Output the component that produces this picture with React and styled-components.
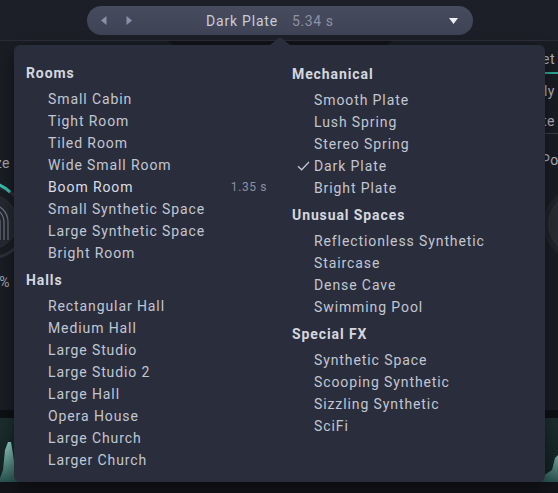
import React from 'react';
import styled, { createGlobalStyle } from 'styled-components';

const GlobalStyle = createGlobalStyle`
  * { box-sizing: border-box; }
  html, body { margin: 0; padding: 0; background: #1b1d25; }
  body { font-family: Roboto, "Liberation Sans", sans-serif; -webkit-font-smoothing: antialiased; }
  #root { width: 558px; height: 493px; }
`;

const columns = [
  [
    {
      title: 'Rooms',
      items: [
        { name: 'Small Cabin' },
        { name: 'Tight Room' },
        { name: 'Tiled Room' },
        { name: 'Wide Small Room' },
        { name: 'Boom Room', time: '1.35 s', hover: true },
        { name: 'Small Synthetic Space' },
        { name: 'Large Synthetic Space' },
        { name: 'Bright Room' },
      ],
    },
    {
      title: 'Halls',
      items: [
        { name: 'Rectangular Hall' },
        { name: 'Medium Hall' },
        { name: 'Large Studio' },
        { name: 'Large Studio 2' },
        { name: 'Large Hall' },
        { name: 'Opera House' },
        { name: 'Large Church' },
        { name: 'Larger Church' },
      ],
    },
  ],
  [
    {
      title: 'Mechanical',
      items: [
        { name: 'Smooth Plate' },
        { name: 'Lush Spring' },
        { name: 'Stereo Spring' },
        { name: 'Dark Plate', checked: true },
        { name: 'Bright Plate' },
      ],
    },
    {
      title: 'Unusual Spaces',
      items: [
        { name: 'Reflectionless Synthetic' },
        { name: 'Staircase' },
        { name: 'Dense Cave' },
        { name: 'Swimming Pool' },
      ],
    },
    {
      title: 'Special FX',
      items: [
        { name: 'Synthetic Space' },
        { name: 'Scooping Synthetic' },
        { name: 'Sizzling Synthetic' },
        { name: 'SciFi' },
      ],
    },
  ],
];

const App = () => {
  return (
    <>
      <GlobalStyle />
      <Page>
        <TopBar>
          <Pill>
            <ArrowBtn>
              <svg width='6' height='9' viewBox='0 0 6 9'>
                <path d='M5.5 0 L0 4.5 L5.5 9 Z' fill='currentColor' />
              </svg>
            </ArrowBtn>
            <ArrowBtn>
              <svg width='6' height='9' viewBox='0 0 6 9'>
                <path d='M0.5 0 L6 4.5 L0.5 9 Z' fill='currentColor' />
              </svg>
            </ArrowBtn>
            <Title>
              Dark Plate<TitleTime>5.34 s</TitleTime>
            </Title>
            <Caret>
              <svg width='9' height='6' viewBox='0 0 9 6'>
                <path d='M0 0 H9 L4.5 6 Z' fill='currentColor' />
              </svg>
            </Caret>
          </Pill>
        </TopBar>
        <Tab />
        <Body>
          <SideLeft>
            <SideLabel>Size</SideLabel>
            <KnobLeft viewBox='0 0 80 80' width='80' height='80'>
              <circle cx='40' cy='40' r='36' fill='none' stroke='#2d303a' strokeWidth='3' />
              <path d='M14.5 65.5 A36 36 0 1 1 60.1 10.1' fill='none' stroke='#35c3ad' strokeWidth='3' />
              <circle cx='40' cy='40' r='27' fill='#262831' stroke='#31343e' strokeWidth='1' />
              <path d='M30 58 V40 A10 10 0 0 1 50 40 V58' fill='none' stroke='#6f7484' strokeWidth='1.2' />
              <path d='M26 58 V40 A14 14 0 0 1 54 40 V58' fill='none' stroke='#6f7484' strokeWidth='1.2' />
              <path d='M22 58 V40 A18 18 0 0 1 58 40 V58' fill='none' stroke='#6f7484' strokeWidth='1.2' />
            </KnobLeft>
            <SideLabel $gap={11}>100%</SideLabel>
          </SideLeft>
          <Center />
          <SideRight>
            <SideTab $accent>Reset</SideTab>
            <SideTab $gap={8}>Early</SideTab>
            <SideTab $gap={12} $line>Late</SideTab>
            <PostLabel>Post</PostLabel>
            <KnobRight viewBox='0 0 80 80' width='80' height='80'>
              <circle cx='40' cy='40' r='37' fill='#22242c' />
              <circle cx='40' cy='40' r='31' fill='#2a2c35' stroke='#32353f' strokeWidth='1' />
            </KnobRight>
          </SideRight>
        </Body>
        <WaveArea>
          <svg width='558' height='64' viewBox='0 0 558 64'>
            <defs>
              <linearGradient id='wv' x1='0' y1='0' x2='0' y2='1'>
                <stop offset='0' stopColor='#8fcfc6' />
                <stop offset='1' stopColor='#2a5450' />
              </linearGradient>
            </defs>
            <path d='M0 64 V60 L3 52 L5 32 L8 24 L11 24 L13 36 L16 60 L540 60 L552 52 L555 40 L558 37 V64 Z' fill='url(#wv)' />
          </svg>
        </WaveArea>
        <Footer />

        <Dropdown>
          <Columns>
            {columns.map((sections, ci) => (
              <Column key={ci} $right={ci === 1}>
                {sections.map((section) => (
                  <Section key={section.title}>
                    <SectionTitle>{section.title}</SectionTitle>
                    {section.items.map((item) => (
                      <Item key={item.name} $hover={item.hover}>
                        <CheckSlot>
                          {item.checked && (
                            <svg width='13' height='10' viewBox='0 0 13 10'>
                              <path d='M1 5.2 L4.6 8.8 L12 1' fill='none' stroke='currentColor' strokeWidth='1.3' />
                            </svg>
                          )}
                        </CheckSlot>
                        <ItemName>{item.name}</ItemName>
                        {item.time && <ItemTime>{item.time}</ItemTime>}
                      </Item>
                    ))}
                  </Section>
                ))}
              </Column>
            ))}
          </Columns>
        </Dropdown>
      </Page>
    </>
  );
};

const Page = styled.div`
  position: relative;
  width: 558px;
  height: 493px;
  overflow: hidden;
  background: #1b1d25;
  display: flex;
  flex-direction: column;
`;

const TopBar = styled.div`
  height: 41px;
  flex: none;
  display: flex;
  justify-content: center;
  padding: 6px 0 0 2px;
  background: #1d1f28;
  border-bottom: 1px solid #2a2d38;
`;

const Pill = styled.div`
  width: 386px;
  height: 29px;
  border-radius: 15px;
  background: linear-gradient(#464b5e, #3e4355);
  display: flex;
  align-items: center;
  padding: 0 15px 0 14px;
  color: #c8ccd8;
`;

const ArrowBtn = styled.span`
  display: flex;
  color: #8990a8;
  & + & {
    margin-left: 19px;
  }
`;

const Title = styled.span`
  margin-left: 74px;
  font-size: 14px;
  letter-spacing: 0.8px;
  color: #c9cdd9;
`;

const TitleTime = styled.span`
  margin-left: 14px;
  letter-spacing: 0.6px;
  color: #8c92a8;
`;

const Caret = styled.span`
  margin-left: auto;
  display: flex;
  color: #eef0f5;
`;

const Tab = styled.div`
  flex: none;
  height: 5px;
  width: 224px;
  margin-left: 168px;
  background: #111319;
  clip-path: polygon(0 0, 100% 0, calc(100% - 6px) 100%, 6px 100%);
`;

const Body = styled.div`
  flex: none;
  height: 364px;
  display: flex;
`;

const SideLeft = styled.div`
  width: 70px;
  margin-left: -56px;
  display: flex;
  flex-direction: column;
  align-items: flex-end;
  color: #a3a7b3;
  font-size: 14px;
`;

const SideLabel = styled.div`
  margin-top: ${({ $gap }) => ($gap ?? 108)}px;
  margin-right: 4px;
  line-height: 18px;
  letter-spacing: 0.5px;
  white-space: nowrap;
`;

const KnobLeft = styled.svg`
  flex: none;
  margin-top: 10px;
  margin-right: -16px;
`;

const Center = styled.div`
  flex: 1;
`;

const SideRight = styled.div`
  width: 70px;
  display: flex;
  flex-direction: column;
  color: #aeb2be;
  font-size: 14px;
  overflow: hidden;
`;

const SideTab = styled.div`
  margin-top: ${({ $gap }) => ($gap ?? 4)}px;
  line-height: 18px;
  text-align: right;
  padding-right: 3px;
  letter-spacing: 0.5px;
  padding-bottom: ${({ $accent, $line }) => ($accent ? 4 : $line ? 3 : 0)}px;
  border-bottom: ${({ $accent, $line }) =>
    $accent ? '2px solid #2fa999' : $line ? '1px solid #3a3d48' : 'none'};
`;

const PostLabel = styled.div`
  margin-top: 17px;
  padding-left: 53px;
  line-height: 18px;
  letter-spacing: 0.5px;
  white-space: nowrap;
`;

const KnobRight = styled.svg`
  flex: none;
  margin-top: 15px;
  margin-left: 52px;
`;

const WaveArea = styled.div`
  flex: none;
  height: 72px;
  border-top: 8px solid #0e1114;
  background: linear-gradient(#1d2e2f, #122020);
  display: flex;
  svg {
    display: block;
  }
`;

const Footer = styled.div`
  flex: none;
  height: 11px;
  background: #131419;
`;

const Dropdown = styled.div`
  position: absolute;
  left: 14px;
  top: 45px;
  width: 531px;
  height: 437px;
  background: #2a2e3c;
  border-radius: 6px;
  box-shadow: 0 6px 18px rgba(0, 0, 0, 0.45);
  &::before {
    content: '';
    position: absolute;
    left: 256px;
    top: -8px;
    width: 20px;
    height: 8px;
    background: #2a2e3c;
    clip-path: polygon(50% 0, 100% 100%, 0 100%);
  }
`;

const Columns = styled.div`
  display: grid;
  grid-template-columns: 266px 1fr;
  padding: 17px 0 0 12px;
`;

const Column = styled.div`
  padding-top: ${({ $right }) => ($right ? 1 : 0)}px;
  padding-right: ${({ $right }) => ($right ? 0 : 25)}px;
`;

const Section = styled.div`
  & + & {
    margin-top: 5px;
  }
`;

const SectionTitle = styled.div`
  font-size: 14px;
  font-weight: 700;
  line-height: 22px;
  margin-bottom: 4px;
  letter-spacing: 0.9px;
  color: #d4d7df;
`;

const Item = styled.div`
  height: 22px;
  display: flex;
  align-items: center;
  font-size: 14px;
  letter-spacing: 0.9px;
  color: ${({ $hover }) => ($hover ? '#dadde6' : '#c2c6d2')};
  white-space: nowrap;
`;

const CheckSlot = styled.span`
  width: 22px;
  flex: none;
  display: flex;
  padding-left: 5px;
  color: #c2c6d2;
`;

const ItemName = styled.span``;

const ItemTime = styled.span`
  margin-left: auto;
  font-size: 12px;
  letter-spacing: 0.6px;
  color: #8b90a1;
`;

export default App;
